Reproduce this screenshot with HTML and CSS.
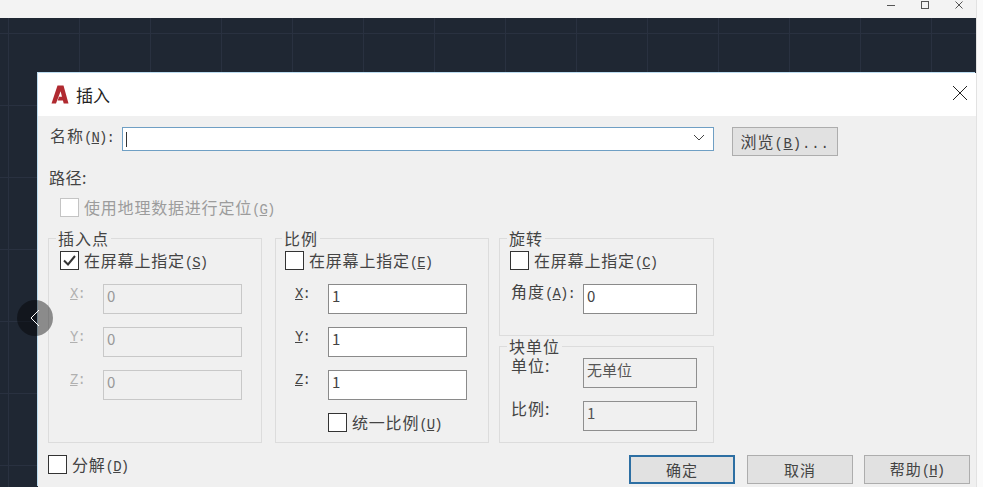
FILE: index.html
```html
<!DOCTYPE html>
<html lang="zh-CN">
<head>
<meta charset="utf-8">
<title>插入</title>
<link rel="stylesheet" href="styles.css">
</head>
<body>
<div class="shell">
  <header class="topbar">
    <svg class="wc" width="10" height="10" viewBox="0 0 10 10"><path d="M1 5.500H9" stroke="#555" fill="none"/></svg>
    <svg class="wc" width="10" height="10" viewBox="0 0 10 10"><rect x="1.500" y="1.500" width="7" height="7" stroke="#555" fill="none"/></svg>
    <svg class="wc" width="10" height="10" viewBox="0 0 10 10"><path d="M1.500 1.500L8.500 8.500M8.500 1.500L1.500 8.500" stroke="#555" fill="none"/></svg>
  </header>
  <main class="canvas">
    <section class="dialog">
      <div class="titlebar">
        <svg class="logo" width="18" height="19" viewBox="0 0 18 19"><path d="M6.500 0.500H12.500L17.500 18.500H12.700L11.900 15.500H6.700L8 11.800H11L9.600 6.200L5 18.500H0.500Z" fill="#b02a30"/></svg>
        <span class="title">插入</span>
        <svg class="close" width="16" height="16" viewBox="0 0 16 16"><path d="M1 1L15 15M15 1L1 15" stroke="#222" fill="none"/></svg>
      </div>
      <div class="body">
        <div class="name-row">
          <label class="name-label">名称<span class="key">(<u>N</u>):</span></label>
          <div class="combo">
            <span class="caret"></span>
            <svg width="12" height="7" viewBox="0 0 12 7"><path d="M1 1L6 6L11 1" stroke="#444" fill="none"/></svg>
          </div>
          <button class="btn browse">浏览<span class="key">(<u>B</u>)...</span></button>
        </div>
        <div class="path">路径:</div>
        <div class="check geo"><span class="box off"></span><span class="muted">使用地理数据进行定位<span class="key">(<u>G</u>)</span></span></div>
        <div class="groups">
          <div class="group g-insert">
            <div class="legend">插入点</div>
            <div class="check"><span class="box"><svg width="17" height="17" viewBox="0 0 17 17"><path d="M3 8.500L7 12.500L14 4" stroke="#333" stroke-width="2" fill="none"/></svg></span><span>在屏幕上指定<span class="key">(<u>S</u>)</span></span></div>
            <div class="field dis"><span class="axis"><span class="key"><u>X</u>:</span></span><span class="val ro">0</span></div>
            <div class="field dis"><span class="axis"><span class="key"><u>Y</u>:</span></span><span class="val ro">0</span></div>
            <div class="field dis"><span class="axis"><span class="key"><u>Z</u>:</span></span><span class="val ro">0</span></div>
          </div>
          <div class="group g-scale">
            <div class="legend">比例</div>
            <div class="check"><span class="box"></span><span>在屏幕上指定<span class="key">(<u>E</u>)</span></span></div>
            <div class="field"><span class="axis"><span class="key"><u>X</u>:</span></span><span class="val">1</span></div>
            <div class="field"><span class="axis"><span class="key"><u>Y</u>:</span></span><span class="val">1</span></div>
            <div class="field"><span class="axis"><span class="key"><u>Z</u>:</span></span><span class="val">1</span></div>
            <div class="check uniform"><span class="box"></span><span>统一比例<span class="key">(<u>U</u>)</span></span></div>
          </div>
          <div class="stack">
            <div class="group g-rotate">
              <div class="legend">旋转</div>
              <div class="check"><span class="box"></span><span>在屏幕上指定<span class="key">(<u>C</u>)</span></span></div>
              <div class="field wide"><span class="axis">角度<span class="key">(<u>A</u>):</span></span><span class="val">0</span></div>
            </div>
            <div class="group g-unit">
              <div class="legend">块单位</div>
              <div class="field wide first"><span class="axis">单位:</span><span class="val ro dark">无单位</span></div>
              <div class="field wide"><span class="axis">比例:</span><span class="val ro dark">1</span></div>
            </div>
          </div>
        </div>
        <div class="footer">
          <div class="check explode"><span class="box"></span><span>分解<span class="key">(<u>D</u>)</span></span></div>
          <div class="actions">
            <button class="btn primary">确定</button>
            <button class="btn">取消</button>
            <button class="btn">帮助<span class="key">(<u>H</u>)</span></button>
          </div>
        </div>
      </div>
    </section>
    <div class="pager"><svg width="10" height="18" viewBox="0 0 10 18"><path d="M9 1L1 9L9 17" stroke="#fff" fill="none"/></svg></div>
  </main>
</div>
</body>
</html>
```
FILE: styles.css
```css
* { box-sizing: border-box; }
html, body { margin: 0; height: 100%; }
body {
  width: 983px;
  height: 487px;
  overflow: hidden;
  background: #fafafa;
  font-family: "Noto Sans CJK SC", "Liberation Sans", sans-serif;
  font-size: 16px;
  color: #444;
}
.shell {
  width: 977px;
  height: 487px;
  display: flex;
  flex-direction: column;
  border-right: 1px solid #e2e2e2;
}
.topbar {
  height: 18px;
  flex: none;
  background: #f3f3f3;
  display: flex;
  justify-content: flex-end;
  gap: 24px;
  padding: 0 12px 0 0;
  align-items: flex-start;
}
.wc { display: block; }
.canvas {
  position: relative;
  flex: 1;
  padding: 55px 0 0 38px;
  background-color: #1f2733;
  background-image:
    linear-gradient(#293140 1px, transparent 1px),
    linear-gradient(90deg, #293140 1px, transparent 1px);
  background-size: 71px 72px;
  background-position: 8px 15px;
}
.dialog {
  height: 414px;
  background: #f0f0f0;
  box-shadow: -1px -1px 0 #bcdcf0;
  display: flex;
  flex-direction: column;
}
.titlebar {
  height: 43px;
  flex: none;
  background: #fff;
  display: flex;
  align-items: center;
  padding: 0 8px 0 13px;
}
.logo { flex: none; margin-top: -1px; }
.title { margin-left: 7px; font-size: 17px; color: #222; }
.close { margin-left: auto; margin-top: -3px; }
.body { flex: 1; padding: 11px 6px 0 10px; display: flex; flex-direction: column; }
.key { font-family: "Liberation Mono", monospace; font-size: 14px; letter-spacing: -0.9px; }
.name-row { display: flex; align-items: flex-start; height: 29px; }
.name-label { width: 74px; flex: none; padding-left: 2px; line-height: 16px; white-space: nowrap; letter-spacing: 1px; }
.combo {
  width: 592px;
  height: 24px;
  background: #fff;
  border: 1px solid #6f9fc4;
  display: flex;
  align-items: center;
  justify-content: space-between;
  padding: 0 8px 0 3px;
}
.caret { width: 1px; height: 15px; background: #333; }
.combo svg { margin-top: -4px; }
.btn {
  width: 106px;
  height: 29px;
  background: #e1e1e1;
  border: 1px solid #adadad;
  font: inherit;
  font-size: 15px;
  color: #444;
  padding: 0;
  letter-spacing: 1px;
  line-height: 1;
}
.browse { margin-left: 18px; font-size: 16px; }
.browse .key { letter-spacing: 0.8px; }
.path { margin-top: 11px; height: 21px; line-height: 21px; padding-left: 1px; letter-spacing: 0.5px; }
.check { display: flex; align-items: center; gap: 5px; height: 19px; white-space: nowrap; font-size: 16px; letter-spacing: 0.8px; }
.check > span:last-child { margin-top: -2px; }
.box {
  width: 19px;
  height: 19px;
  flex: none;
  background: #fff;
  border: 1px solid #333;
  display: flex;
  align-items: center;
  justify-content: center;
}
.box.off { border-color: #c4c4c4; }
.geo { margin: 10px 0 0 12px; }
.muted { color: #9c9c9c; }
.groups { display: flex; margin-top: 20px; height: 206px; padding-top: 1px; }
.group { border: 1px solid #dcdcdc; }
.legend {
  width: max-content;
  height: 16px;
  line-height: 16px;
  margin-top: -9px;
  padding: 0 2px;
  background: #f0f0f0;
  font-size: 16px;
  letter-spacing: 1px;
}
.g-insert { width: 214px; padding-left: 11px; }
.g-insert .legend { margin-left: -4px; }
.g-scale { width: 214px; margin-left: 13px; padding-left: 9px; }
.g-scale .legend { margin-left: -3px; }
.stack { width: 215px; margin-left: 10px; display: flex; flex-direction: column; gap: 10px; }
.g-rotate { height: 98px; padding-left: 10px; }
.g-unit { height: 97px; padding-left: 10px; }
.g-rotate .legend, .g-unit .legend { margin-left: -3px; }
.group > .check { margin-top: 5px; }
.field { display: flex; margin-top: 13px; height: 30px; }
.check + .field { margin-top: 14px; }
.axis { width: 43px; padding-left: 10px; line-height: 18px; margin-top: -2px; flex: none; white-space: nowrap; letter-spacing: 1px; }
.val {
  width: 139px;
  height: 30px;
  background: #fff;
  border: 1px solid #8a8a8a;
  padding-left: 3px;
  line-height: 22px;
  font-size: 15px;
  color: #444;
}
.val.ro { background: transparent; border-color: #c8c8c8; color: #999; }
.val.ro.dark { border-color: #8f8f8f; color: #555; }
.dis .axis { color: #b0b0b0; }
.wide .axis { width: 73px; padding-left: 1px; }
.wide .val { width: 114px; }
.first { margin-top: 4px; }
.group > .uniform { margin: 13px 0 0 43px; }
.footer { display: flex; justify-content: space-between; align-items: flex-start; margin-top: 12px; }
.actions { display: flex; gap: 11px; }
.primary { border: 2px solid #2d6fa3; margin-right: 1px; }
.pager {
  position: absolute;
  left: 17px;
  top: 282px;
  width: 36px;
  height: 36px;
  border-radius: 50%;
  background: rgba(0, 0, 0, 0.42);
  display: flex;
  align-items: center;
  justify-content: center;
}
```
